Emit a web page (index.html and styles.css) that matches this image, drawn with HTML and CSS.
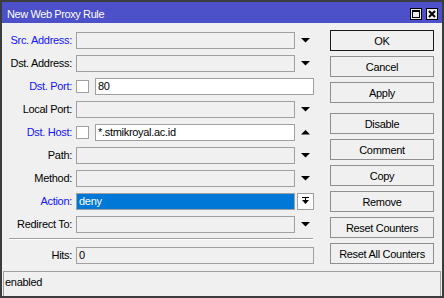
FILE: index.html
```html
<!DOCTYPE html>
<html lang="en">
<head>
    <meta charset="UTF-8">
    <title>New Web Proxy Rule</title>
    <link rel="stylesheet" href="styles.css">
</head>
<body>
    <div class="window">
        <div class="titlebar">
            <span class="title">New Web Proxy Rule</span>
            <div class="title-btns">
                <span class="tbtn">
                    <svg width="8" height="8" viewBox="0 0 8 8"><path d="M0 0h8v8H0z M1 2v5h6V2z" fill="#000" fill-rule="evenodd"/></svg>
                </span>
                <span class="tbtn">
                    <svg width="8" height="8" viewBox="0 0 8 8"><path d="M1 1L7 7M7 1L1 7" stroke="#000" stroke-width="2"/></svg>
                </span>
            </div>
        </div>

        <div class="main">
            <div class="form">
                <div class="row">
                    <label class="lbl blue">Src. Address:</label>
                    <div class="ctrl">
                        <div class="field"></div>
                        <span class="arrow"><svg width="9" height="5" viewBox="0 0 9 5"><path d="M0 0h9L4.5 4.5z"/></svg></span>
                    </div>
                </div>
                <div class="row">
                    <label class="lbl">Dst. Address:</label>
                    <div class="ctrl">
                        <div class="field"></div>
                        <span class="arrow"><svg width="9" height="5" viewBox="0 0 9 5"><path d="M0 0h9L4.5 4.5z"/></svg></span>
                    </div>
                </div>
                <div class="row">
                    <label class="lbl blue">Dst. Port:</label>
                    <div class="ctrl">
                        <span class="check"></span>
                        <div class="field input">80</div>
                    </div>
                </div>
                <div class="row">
                    <label class="lbl">Local Port:</label>
                    <div class="ctrl">
                        <div class="field"></div>
                        <span class="arrow"><svg width="9" height="5" viewBox="0 0 9 5"><path d="M0 0h9L4.5 4.5z"/></svg></span>
                    </div>
                </div>
                <div class="row">
                    <label class="lbl blue">Dst. Host:</label>
                    <div class="ctrl">
                        <span class="check"></span>
                        <div class="field input">*.stmikroyal.ac.id</div>
                        <span class="arrow"><svg width="9" height="5" viewBox="0 0 9 5"><path d="M0 4.5h9L4.5 0z"/></svg></span>
                    </div>
                </div>
                <div class="row">
                    <label class="lbl">Path:</label>
                    <div class="ctrl">
                        <div class="field"></div>
                        <span class="arrow"><svg width="9" height="5" viewBox="0 0 9 5"><path d="M0 0h9L4.5 4.5z"/></svg></span>
                    </div>
                </div>
                <div class="row">
                    <label class="lbl">Method:</label>
                    <div class="ctrl">
                        <div class="field"></div>
                        <span class="arrow"><svg width="9" height="5" viewBox="0 0 9 5"><path d="M0 0h9L4.5 4.5z"/></svg></span>
                    </div>
                </div>
                <div class="row">
                    <label class="lbl blue">Action:</label>
                    <div class="ctrl">
                        <div class="field selected">deny</div>
                        <span class="drop-btn">
                            <svg width="7" height="8" viewBox="0 0 7 8"><path d="M0 0h7v1H0z M3 1h1v2H3z M0 3h7L3.5 7z"/></svg>
                        </span>
                    </div>
                </div>
                <div class="row">
                    <label class="lbl">Redirect To:</label>
                    <div class="ctrl">
                        <div class="field"></div>
                        <span class="arrow"><svg width="9" height="5" viewBox="0 0 9 5"><path d="M0 0h9L4.5 4.5z"/></svg></span>
                    </div>
                </div>

                <div class="separator"></div>

                <div class="row">
                    <label class="lbl">Hits:</label>
                    <div class="ctrl">
                        <div class="field">0</div>
                    </div>
                </div>
            </div>

            <div class="buttons">
                <button class="btn default">OK</button>
                <button class="btn">Cancel</button>
                <button class="btn">Apply</button>
                <button class="btn group">Disable</button>
                <button class="btn">Comment</button>
                <button class="btn">Copy</button>
                <button class="btn">Remove</button>
                <button class="btn">Reset Counters</button>
                <button class="btn">Reset All Counters</button>
            </div>
        </div>

        <div class="status">enabled</div>
    </div>
</body>
</html>
```

FILE: styles.css
```css
body {
    margin: 0;
    padding: 0;
    font-family: "Liberation Sans", Arial, sans-serif;
    font-size: 11px;
    letter-spacing: -0.3px;
    color: #000;
}
.window {
    width: 444px;
    height: 298px;
    box-sizing: border-box;
    border: 2px solid #3c3c3c;
    background-color: #f0f0f0;
    display: flex;
    flex-direction: column;
}
.titlebar {
    height: 21px;
    background-color: #4c50c9;
    display: flex;
    align-items: center;
    justify-content: space-between;
    padding: 0 4px 0 5px;
}
.title {
    color: #fff;
    font-size: 11px;
    letter-spacing: -0.4px;
    padding-top: 3px;
}
.title-btns {
    display: flex;
    gap: 4px;
    padding-top: 2px;
}
.tbtn {
    width: 12px;
    height: 12px;
    box-sizing: border-box;
    border: 1px solid #000;
    background-color: #ececec;
    display: flex;
    align-items: center;
    justify-content: center;
}
.main {
    flex: 1;
    display: flex;
    gap: 16px;
}
.form {
    padding-top: 8px;
}
.row {
    display: grid;
    grid-template-columns: 70px 238px;
    column-gap: 4px;
    height: 17px;
    margin-bottom: 6px;
}
.lbl {
    text-align: right;
    line-height: 17px;
    padding-top: 1px;
}
.blue {
    color: #1414ff;
}
.ctrl {
    display: flex;
    align-items: center;
}
.field {
    flex: 1;
    height: 17px;
    box-sizing: border-box;
    border: 1px solid #a0a0a0;
    background-color: #f0f0f0;
    padding-left: 2px;
    line-height: 15px;
}
.field.input {
    background-color: #fff;
}
.field.selected {
    background-color: #0078d7;
    color: #fff;
}
.arrow {
    width: 18px;
    display: flex;
    justify-content: center;
    padding-left: 1px;
}
.check {
    width: 13px;
    height: 13px;
    box-sizing: border-box;
    border: 1px solid #a0a0a0;
    background-color: #fff;
    margin-right: 6px;
}
.drop-btn {
    width: 17px;
    height: 17px;
    box-sizing: border-box;
    border: 1px solid #a0a0a0;
    background-color: #fdfdfd;
    margin-left: 2px;
    display: flex;
    align-items: center;
    justify-content: center;
}
.separator {
    width: 304px;
    margin: 1px 0 6px 7px;
    border-top: 1px solid #a0a0a0;
    border-bottom: 1px solid #fff;
}
.buttons {
    padding-top: 7px;
    display: flex;
    flex-direction: column;
    gap: 5px;
}
.btn {
    width: 104px;
    height: 21px;
    box-sizing: border-box;
    border: 1px solid #8f8f8f;
    background-color: #f0f0f0;
    font-family: inherit;
    font-size: 11px;
    letter-spacing: -0.3px;
    color: #000;
    padding: 0;
}
.btn.default {
    border-color: #1a1a1a;
}
.btn.group {
    margin-top: 5px;
}
.status {
    height: 25px;
    box-sizing: border-box;
    margin: 0 1px;
    border: 1px solid #a0a0a0;
    border-bottom: none;
    padding: 4px 0 0 1px;
}
```
